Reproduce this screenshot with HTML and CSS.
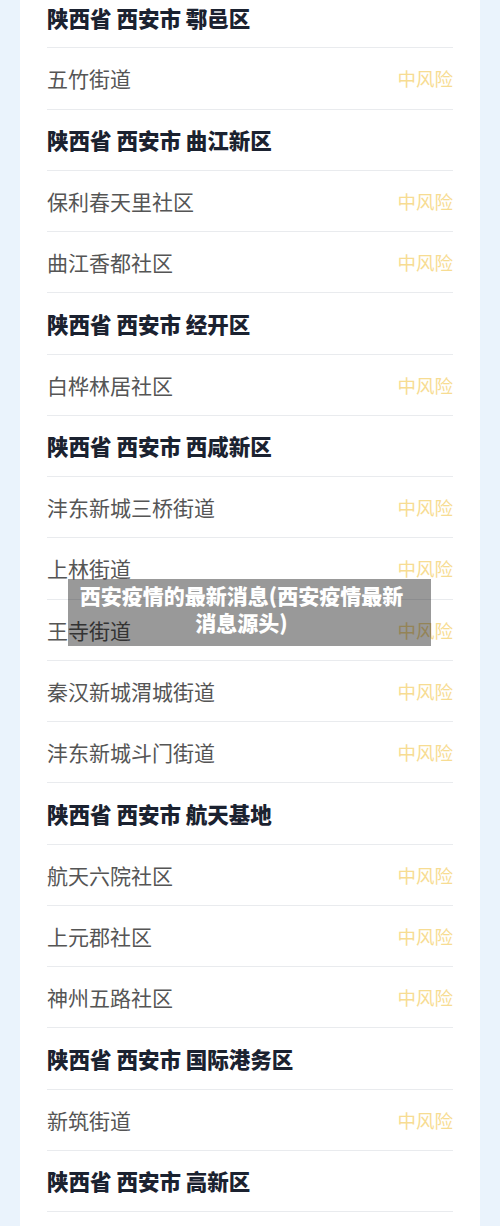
FILE: index.html
```html
<!DOCTYPE html>
<html lang="zh-CN">
<head>
    <meta charset="UTF-8">
    <meta name="viewport" content="width=device-width, initial-scale=1.0">
    <title>西安疫情的最新消息</title>
    <link rel="stylesheet" href="styles.css">
</head>
<body>
    <div class="card">
        <div class="row area">陕西省 西安市 鄠邑区</div>
        <div class="row"><span>五竹街道</span><span class="risk">中风险</span></div>
        <div class="row area">陕西省 西安市 曲江新区</div>
        <div class="row"><span>保利春天里社区</span><span class="risk">中风险</span></div>
        <div class="row"><span>曲江香都社区</span><span class="risk">中风险</span></div>
        <div class="row area">陕西省 西安市 经开区</div>
        <div class="row"><span>白桦林居社区</span><span class="risk">中风险</span></div>
        <div class="row area">陕西省 西安市 西咸新区</div>
        <div class="row"><span>沣东新城三桥街道</span><span class="risk">中风险</span></div>
        <div class="row"><span>上林街道</span><span class="risk">中风险</span></div>
        <div class="row"><span>王寺街道</span><span class="risk">中风险</span></div>
        <div class="row"><span>秦汉新城渭城街道</span><span class="risk">中风险</span></div>
        <div class="row"><span>沣东新城斗门街道</span><span class="risk">中风险</span></div>
        <div class="row area">陕西省 西安市 航天基地</div>
        <div class="row"><span>航天六院社区</span><span class="risk">中风险</span></div>
        <div class="row"><span>上元郡社区</span><span class="risk">中风险</span></div>
        <div class="row"><span>神州五路社区</span><span class="risk">中风险</span></div>
        <div class="row area">陕西省 西安市 国际港务区</div>
        <div class="row"><span>新筑街道</span><span class="risk">中风险</span></div>
        <div class="row area">陕西省 西安市 高新区</div>
        <div class="row"></div>
    </div>
    <div class="caption">西安疫情的最新消息(西安疫情最新消息源头)</div>
</body>
</html>
```

FILE: styles.css
```css
body {
    margin: 0;
    background-color: #eaf3fc;
    font-family: "Noto Sans CJK SC", "Noto Sans", sans-serif;
    overflow: hidden;
    height: 1226px;
    position: relative;
}
.card {
    background-color: #fff;
    margin: -13px 20px 0;
    padding: 0 27px;
}
.row {
    box-sizing: border-box;
    height: 61.26px;
    border-bottom: 1px solid #e9ebee;
    display: flex;
    justify-content: space-between;
    align-items: center;
    font-size: 21px;
    color: #555;
}
.row.area {
    font-size: 21.5px;
    font-weight: 900;
    color: #1b2230;
}
.risk {
    font-size: 18.5px;
    color: #f7dc92;
}
.caption {
    position: absolute;
    top: 579px;
    left: 68px;
    width: 363px;
    height: 67px;
    box-sizing: border-box;
    padding: 3px 24px 0 8px;
    background-color: rgba(0, 0, 0, 0.4);
    color: #fff;
    font-size: 21px;
    font-weight: 900;
    line-height: 27px;
    text-align: center;
}
```
